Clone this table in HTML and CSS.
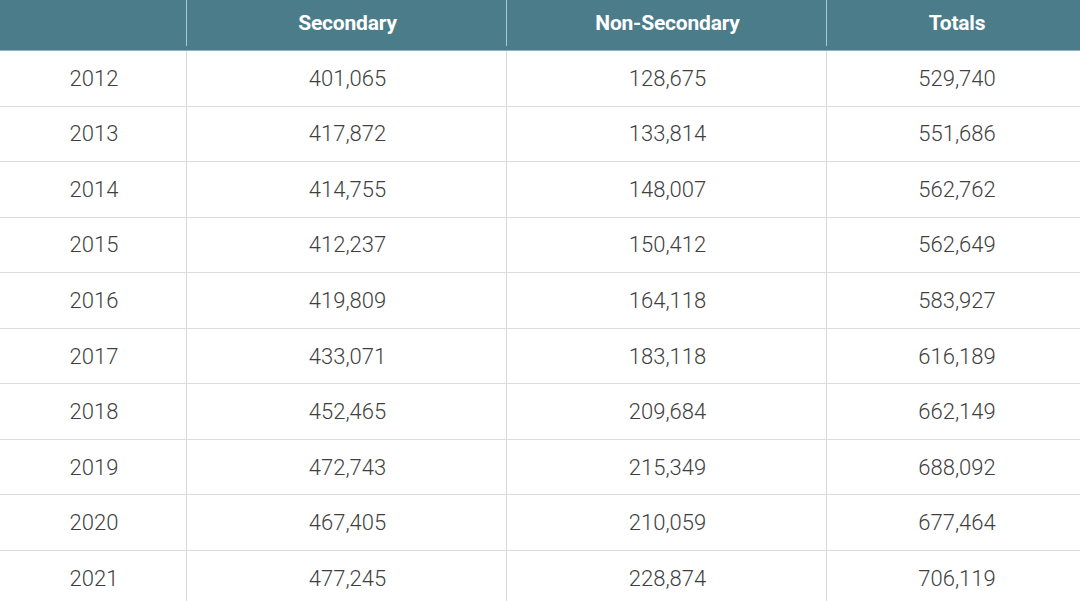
FILE: index.html
```
<!DOCTYPE html>
<html>
<head>
<meta charset="utf-8">
<link rel="stylesheet" href="styles.css">
</head>
<body>
<div class="table">
  <div class="row head">
    <div class="cell"></div>
    <div class="cell">Secondary</div>
    <div class="cell">Non-Secondary</div>
    <div class="cell">Totals</div>
  </div>
  <div class="row"><div class="cell">2012</div><div class="cell">401,065</div><div class="cell">128,675</div><div class="cell">529,740</div></div>
  <div class="row"><div class="cell">2013</div><div class="cell">417,872</div><div class="cell">133,814</div><div class="cell">551,686</div></div>
  <div class="row"><div class="cell">2014</div><div class="cell">414,755</div><div class="cell">148,007</div><div class="cell">562,762</div></div>
  <div class="row"><div class="cell">2015</div><div class="cell">412,237</div><div class="cell">150,412</div><div class="cell">562,649</div></div>
  <div class="row"><div class="cell">2016</div><div class="cell">419,809</div><div class="cell">164,118</div><div class="cell">583,927</div></div>
  <div class="row"><div class="cell">2017</div><div class="cell">433,071</div><div class="cell">183,118</div><div class="cell">616,189</div></div>
  <div class="row"><div class="cell">2018</div><div class="cell">452,465</div><div class="cell">209,684</div><div class="cell">662,149</div></div>
  <div class="row"><div class="cell">2019</div><div class="cell">472,743</div><div class="cell">215,349</div><div class="cell">688,092</div></div>
  <div class="row"><div class="cell">2020</div><div class="cell">467,405</div><div class="cell">210,059</div><div class="cell">677,464</div></div>
  <div class="row"><div class="cell">2021</div><div class="cell">477,245</div><div class="cell">228,874</div><div class="cell">706,119</div></div>
</div>
</body>
</html>
```
FILE: styles.css
```
html, body {
  margin: 0;
  padding: 0;
  background: #ffffff;
  overflow: hidden;
}
.table {
  width: 1080px;
  font-family: Roboto, "Liberation Sans", sans-serif;
}
.row {
  display: grid;
  grid-template-columns: 186px 320px 320px 1fr;
  height: 55.56px;
  box-sizing: border-box;
  border-bottom: 1px solid #dcdcdc;
  font-size: 22px;
  font-weight: 300;
  color: #3f3f3f;
}
.cell {
  display: flex;
  align-items: center;
  justify-content: center;
  padding-left: 2px;
}
.cell:last-child {
  padding-left: 7px;
}
.cell + .cell {
  border-left: 1px solid #d8d8d8;
}
.row.head {
  height: 51px;
  background: #4a7c8a;
  color: #ffffff;
  font-weight: 700;
  font-size: 21px;
  letter-spacing: -0.2px;
  border-bottom: 1px solid #8fb3bd;
  padding-bottom: 4px;
}
.row.head .cell + .cell {
  border-left: 1px solid #a9cbd4;
}
```
